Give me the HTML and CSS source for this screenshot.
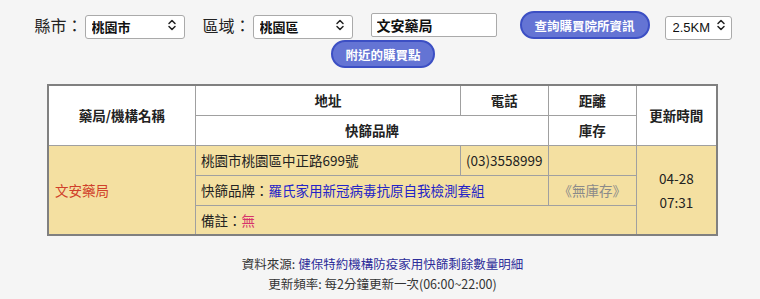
FILE: index.html
```html
<!DOCTYPE html>
<html lang="zh-Hant">
<head>
  <meta charset="UTF-8">
  <meta name="viewport" content="width=device-width, initial-scale=1.0">
  <title>快篩實名制購買點查詢</title>
  <link rel="stylesheet" href="styles.css">
</head>
<body>
  <!-- Search Bar -->
  <div class="search">
    <span class="label">縣市：</span>
    <div class="select-wrap sel-city">
      <select>
        <option>桃園市</option>
      </select>
      <svg class="chev" viewBox="0 0 10 12" width="10" height="12"><path d="M2 4.5 L5 1.5 L8 4.5 M2 7.5 L5 10.5 L8 7.5" fill="none" stroke="#222" stroke-width="1.5" stroke-linecap="round" stroke-linejoin="round"/></svg>
    </div>
    <span class="label">區域：</span>
    <div class="select-wrap sel-area">
      <select>
        <option>桃園區</option>
      </select>
      <svg class="chev" viewBox="0 0 10 12" width="10" height="12"><path d="M2 4.5 L5 1.5 L8 4.5 M2 7.5 L5 10.5 L8 7.5" fill="none" stroke="#222" stroke-width="1.5" stroke-linecap="round" stroke-linejoin="round"/></svg>
    </div>
    <input class="keyword" type="text" value="文安藥局">
    <button class="btn btn-query">查詢購買院所資訊</button>
    <div class="select-wrap sel-dist">
      <select>
        <option>2.5KM</option>
      </select>
      <svg class="chev" viewBox="0 0 10 12" width="10" height="12"><path d="M2 4.5 L5 1.5 L8 4.5 M2 7.5 L5 10.5 L8 7.5" fill="none" stroke="#222" stroke-width="1.5" stroke-linecap="round" stroke-linejoin="round"/></svg>
    </div>
    <button class="btn btn-near">附近的購買點</button>
  </div>

  <!-- Result Table -->
  <table class="result">
    <colgroup>
      <col class="c-name">
      <col class="c-addr">
      <col class="c-tel">
      <col class="c-dist">
      <col class="c-time">
    </colgroup>
    <thead>
      <tr>
        <th rowspan="2">藥局/機構名稱</th>
        <th>地址</th>
        <th>電話</th>
        <th>距離</th>
        <th rowspan="2">更新時間</th>
      </tr>
      <tr>
        <th colspan="2">快篩品牌</th>
        <th>庫存</th>
      </tr>
    </thead>
    <tbody>
      <tr>
        <td rowspan="3" class="name">文安藥局</td>
        <td>桃園市桃園區中正路699號</td>
        <td>(03)3558999</td>
        <td></td>
        <td rowspan="3" class="time">04-28<br>07:31</td>
      </tr>
      <tr>
        <td colspan="2">快篩品牌：<span class="brand">羅氏家用新冠病毒抗原自我檢測套組</span></td>
        <td class="stock">《無庫存》</td>
      </tr>
      <tr>
        <td colspan="3">備註：<span class="note">無</span></td>
      </tr>
    </tbody>
  </table>

  <!-- Footer -->
  <div class="footer">
    <p>資料來源: <a href="#">健保特約機構防疫家用快篩剩餘數量明細</a></p>
    <p>更新頻率: 每2分鐘更新一次(06:00~22:00)</p>
  </div>
</body>
</html>
```

FILE: styles.css
```css
/* Reset */
* {
  margin: 0;
  padding: 0;
  box-sizing: border-box;
}

body {
  font-family: "Noto Sans CJK TC", "Noto Sans", sans-serif;
  background: #f5f5f5;
  color: #222;
}

/* Search Bar */
.search {
  display: flex;
  flex-wrap: wrap;
  justify-content: center;
  align-items: center;
  width: 720px;
  margin: 0 auto;
  padding: 11px 0 0 6px;
  row-gap: 1px;
}

.label {
  font-size: 16px;
  line-height: 28px;
  color: #222;
  margin-right: 2px;
}

.select-wrap {
  position: relative;
  height: 24px;
}

.select-wrap select {
  appearance: none;
  -webkit-appearance: none;
  width: 100%;
  height: 24px;
  border: 1px solid #aaa;
  border-radius: 3px;
  background: #fff;
  font-family: inherit;
  font-size: 13px;
  font-weight: bold;
  color: #111;
  padding: 0 6px;
}

.chev {
  position: absolute;
  right: 8px;
  top: 6px;
  pointer-events: none;
}

.sel-city,
.sel-area {
  width: 100px;
  margin-right: 18px;
}

.sel-dist {
  width: 67px;
}

.sel-dist select {
  font-weight: normal;
  font-family: "Liberation Sans", Arial, sans-serif;
  font-size: 13px;
  color: #111;
  padding: 0 0 0 7px;
}

.sel-dist .chev {
  right: 6px;
}

.keyword {
  width: 126px;
  height: 24px;
  border: 1px solid #aaa;
  border-radius: 2px;
  background: #fff;
  font-family: inherit;
  font-size: 14px;
  font-weight: bold;
  color: #111;
  padding: 0 5px;
  margin-right: 23px;
}

/* Buttons */
.btn {
  height: 28px;
  padding: 0;
  border: 2px solid #3c4fc4;
  border-radius: 14px;
  background-color: #6474d4;
  color: #fff;
  font-family: inherit;
  font-size: 12.5px;
  font-weight: bold;
  white-space: nowrap;
  cursor: pointer;
}

.btn-query {
  width: 130px;
  margin-right: 15px;
}

.btn-near {
  width: 104px;
}

/* Result Table */
.result {
  border-collapse: collapse;
  width: 671px;
  margin: 16px auto 0 47px;
  border: 2px solid #808080;
  font-size: 13.5px;
  color: #222;
}

.c-name { width: 148px; }
.c-addr { width: 266px; }
.c-tel { width: 88px; }
.c-dist { width: 88px; }
.c-time { width: 81px; }

.result th,
.result td {
  border: 1px solid #a0a0a0;
  height: 30px;
  padding: 0 5px;
}

.result th {
  background: #fff;
  font-size: 13.5px;
  font-weight: bold;
  color: #222;
  text-align: center;
}

.result td {
  background: #f4e0a1;
  text-align: left;
}

.result td.name {
  color: #d0402a;
  padding-left: 6px;
}

.result td.time {
  text-align: center;
  line-height: 24px;
}

.result td.stock {
  text-align: center;
  color: #8a8a8a;
}

.brand {
  color: #2424c8;
}

.note {
  color: #d6336c;
}

/* Footer */
.footer {
  margin-top: 18px;
  padding-left: 5px;
  text-align: center;
  font-size: 12.5px;
  line-height: 20px;
  color: #333;
}

.footer a {
  color: #2d2d9a;
  text-decoration: none;
}
```
